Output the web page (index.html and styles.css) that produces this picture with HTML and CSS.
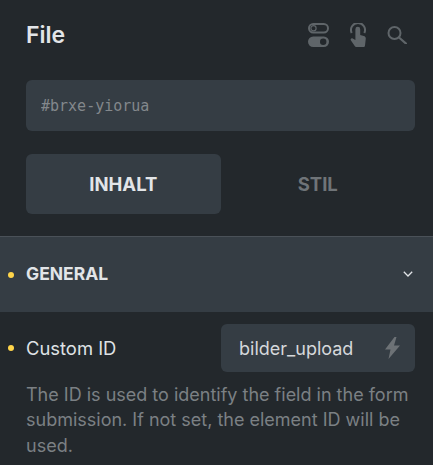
FILE: index.html
```html
<!DOCTYPE html>
<html lang="en">
<head>
<meta charset="UTF-8">
<meta name="viewport" content="width=device-width, initial-scale=1.0">
<title>File</title>
<link rel="stylesheet" href="styles.css">
</head>
<body>

<div class="panel">
  <div class="header">
    <h1 class="title">File</h1>
    <div class="actions">
      <svg class="icon-toggle" width="21" height="24" viewBox="0 0 21 24">
        <rect x="1" y="1" width="19" height="8.5" rx="4.2" fill="none" stroke="#5f6569" stroke-width="2"/>
        <circle cx="5.5" cy="5.2" r="2.6" fill="none" stroke="#5f6569" stroke-width="1.2"/>
        <rect x="0" y="13.5" width="21" height="10.5" rx="5.2" fill="#5f6569"/>
        <circle cx="15.2" cy="18.7" r="3.2" fill="#23282c"/>
      </svg>
      <svg class="icon-touch" width="16" height="24" viewBox="0 0 16 24">
        <path d="M1.7 10A7 7 0 1 1 14.3 10" fill="none" stroke="#5f6569" stroke-width="2"/>
        <path d="M5.4 6.2a2.4 2.4 0 0 1 4.8 0V12l3.6 1c1.2.4 2 1.2 2 2.4l-.8 7c-.1 1.1-.7 1.6-1.8 1.6H6.2c-.6 0-1-.2-1.3-.7L.8 17.2c-.7-1.2.6-2.6 1.9-1.8l2.7 1.5z" fill="#5f6569"/>
      </svg>
      <svg class="icon-search" width="20" height="18" viewBox="0 0 20 18">
        <circle cx="7.5" cy="7" r="6" fill="none" stroke="#5f6569" stroke-width="2"/>
        <path d="M12 11.5L19 17.6" stroke="#5f6569" stroke-width="2.2" stroke-linecap="round"/>
      </svg>
    </div>
  </div>

  <div class="id-row">
    <input class="id-input" type="text" placeholder="#brxe-yiorua">
  </div>

  <div class="tabs">
    <div class="tab tab-active">INHALT</div>
    <div class="tab">STIL</div>
  </div>

  <div class="section-head">
    <span class="dot"></span>
    <span class="section-title">GENERAL</span>
    <svg class="chevron" width="10" height="6" viewBox="0 0 10 6">
      <path d="M0.8 0.8L5 5L9.2 0.8" fill="none" stroke="#e2e5e8" stroke-width="1.3"/>
    </svg>
  </div>

  <div class="field">
    <div class="field-row">
      <span class="dot"></span>
      <label class="field-label">Custom ID</label>
      <div class="field-control">
        <span class="field-value">bilder_upload</span>
        <svg class="bolt" width="15" height="22" viewBox="0 0 15 22">
          <path d="M9.5 0L0 12.5H5.5L3.5 22L15 8.5H9L11.5 0z" fill="#6d7276"/>
        </svg>
      </div>
    </div>
    <p class="field-desc">The ID is used to identify the field in the form submission. If not set, the element ID will be used.</p>
  </div>
</div>

</body>
</html>
```

FILE: styles.css
```css
* {
  box-sizing: border-box;
}

html, body {
  margin: 0;
  padding: 0;
  height: 100%;
}

body {
  background-color: #23282c;
  font-family: Inter, "Liberation Sans", sans-serif;
  overflow: hidden;
}

.panel {
  width: 433px;
  height: 465px;
  overflow: hidden;
}

.header {
  display: flex;
  justify-content: space-between;
  align-items: center;
  height: 70px;
  padding: 0 26px 0 26px;
}

.title {
  margin: 0;
  font-size: 23px;
  font-weight: 600;
  color: #e2e5e8;
}

.actions {
  display: flex;
  align-items: center;
  gap: 21px;
}

.id-row {
  padding: 10px 18px 0 26px;
}

.id-input {
  display: block;
  width: 100%;
  height: 51px;
  padding: 0 15px;
  background-color: #353d44;
  border: none;
  border-radius: 6px;
  font-family: "DejaVu Sans Mono", monospace;
  font-size: 15px;
  color: #e2e5e8;
}

.id-input::placeholder {
  color: #83888c;
  opacity: 1;
}

.tabs {
  display: flex;
  padding: 23px 18px 0 26px;
}

.tab {
  flex: 1;
  height: 60px;
  display: flex;
  align-items: center;
  justify-content: center;
  border-radius: 6px;
  font-size: 18.5px;
  font-weight: 700;
  color: #6f7478;
}

.tab-active {
  background-color: #353d44;
  color: #e2e5e8;
}

.section-head {
  position: relative;
  display: flex;
  align-items: center;
  justify-content: space-between;
  height: 76px;
  margin-top: 22px;
  padding: 0 20px 2px 26px;
  background-color: #353d44;
  border-top: 1px solid #4a5158;
}

.section-title {
  font-size: 17.5px;
  font-weight: 700;
  color: #e2e5e8;
}

.dot {
  position: absolute;
  left: 8px;
  top: 50%;
  width: 6px;
  height: 6px;
  margin-top: -3px;
  border-radius: 50%;
  background-color: #ffd54a;
}

.field {
  padding: 12px 18px 0 26px;
}

.field-row {
  position: relative;
  display: flex;
  align-items: center;
  justify-content: space-between;
}

.field-row .dot {
  left: -18px;
}

.field-label {
  font-size: 18.4px;
  color: #dfe2e5;
}

.field-control {
  display: flex;
  align-items: center;
  justify-content: space-between;
  width: 194px;
  height: 48px;
  padding: 0 15px 0 18px;
  background-color: #353d44;
  border-radius: 6px;
}

.field-value {
  font-size: 18px;
  color: #d5d8db;
}

.field-desc {
  margin: 10px 0 0 0;
  font-size: 18px;
  line-height: 25.3px;
  color: #7b8084;
}
```
